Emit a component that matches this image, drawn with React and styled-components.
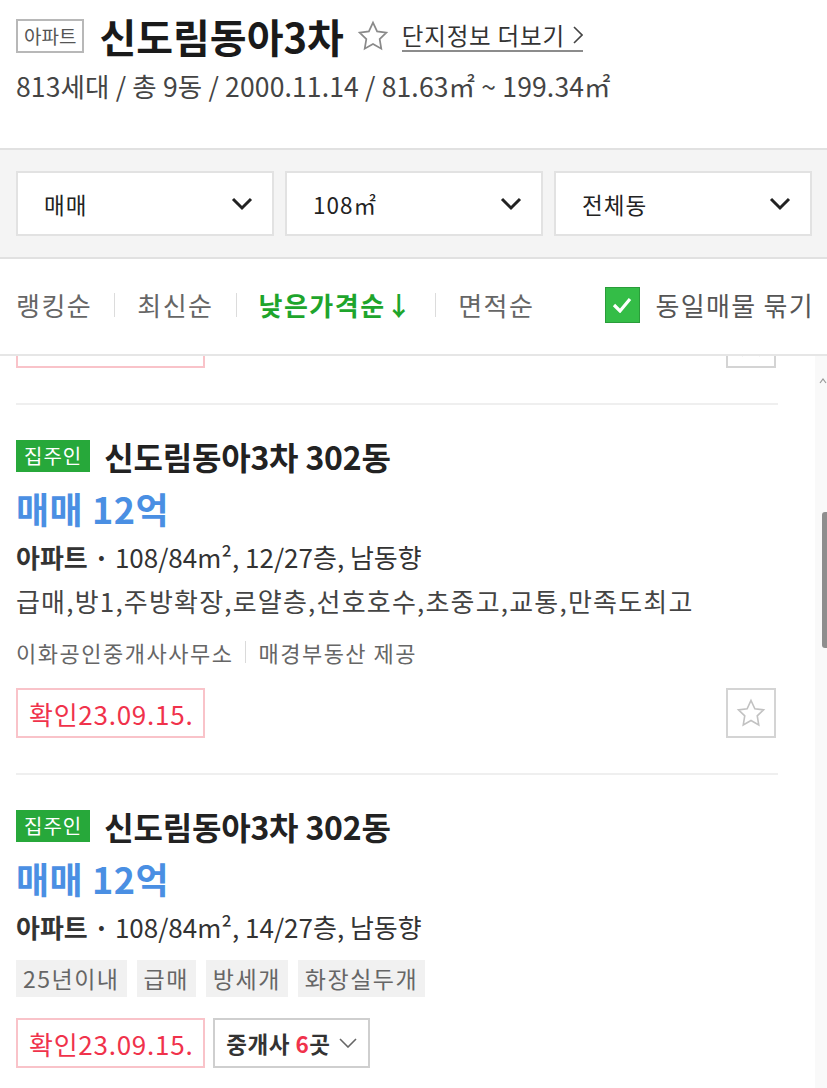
import React, { useLayoutEffect, useRef } from 'react'
import styled, { createGlobalStyle } from 'styled-components'

const GlobalStyle = createGlobalStyle`
  html, body {
    margin: 0;
    padding: 0;
    background: #fff;
  }
  body {
    font-family: "Noto Sans CJK KR", "Noto Sans", sans-serif;
    color: #222;
  }
  * { box-sizing: border-box; }
`

const Page = styled.div`
  width: 827px;
  height: 1088px;
  display: flex;
  flex-direction: column;
  overflow: hidden;
`

const Header = styled.header`
  padding: 12px 16px 44px;
`

const TitleRow = styled.div`
  display: flex;
  align-items: center;
  height: 48px;
`

const TypeBadge = styled.span`
  border: 2px solid #b8b8b8;
  color: #555;
  font-size: 19px;
  line-height: 30px;
  padding: 0 6px;
`

const Title = styled.h1`
  margin: 0 0 0 15px;
  font-size: 40px;
  font-weight: 700;
  line-height: 48px;
  color: #1a1a1a;
`

const FavIcon = styled.span`
  display: flex;
  margin-left: 13px;
`

const DetailLink = styled.a`
  margin-left: 13px;
  display: inline-flex;
  align-items: center;
  gap: 8px;
  font-size: 23.5px;
  line-height: 30px;
  color: #333;
  text-decoration: none;
  letter-spacing: 0.8px;
  border-bottom: 2px solid #8c8c8c;
`

const Meta = styled.div`
  margin-top: 8px;
  font-size: 26.5px;
  line-height: 36px;
  color: #444;
  letter-spacing: 0.15px;
  white-space: nowrap;
`

const FilterBar = styled.div`
  border-top: 2px solid #e1e1e1;
  border-bottom: 2px solid #e1e1e1;
  background: #f4f4f4;
  padding: 21px 15px 21px 16px;
  display: grid;
  grid-template-columns: repeat(3, 1fr);
  gap: 11px;
`

const Select = styled.div`
  height: 65px;
  border: 2px solid #e2e2e2;
  background: #fff;
  display: flex;
  align-items: center;
  justify-content: space-between;
  padding: 0 19px 0 26px;
  font-size: 22.5px;
  letter-spacing: 1px;
  color: #222;
`

const SortBar = styled.div`
  height: 95px;
  display: flex;
  align-items: center;
  padding: 0 13px 4px 16px;
`

const SortItem = styled.span`
  font-size: 26px;
  line-height: 36px;
  color: ${({ $active }) => ($active ? '#1ea52c' : '#666')};
  font-weight: ${({ $active }) => ($active ? 700 : 400)};
  letter-spacing: 1.5px;
  white-space: nowrap;
`

const SortSep = styled.span`
  width: 1px;
  height: 24px;
  background: #dcdcdc;
  margin: 0 22px;
`

const SameCheck = styled.label`
  margin-left: auto;
  display: flex;
  align-items: center;
  gap: 16px;
  font-size: 26px;
  color: #555;
  letter-spacing: 1.3px;
  white-space: nowrap;
`

const CheckBox = styled.span`
  width: 35px;
  height: 36px;
  background: #34bd47;
  border: 1px solid #2a9c3a;
  display: flex;
  align-items: center;
  justify-content: center;
`

const ListArea = styled.div`
  flex: 1;
  min-height: 0;
  display: flex;
  border-top: 2px solid #e6e6e6;
`

const Scroller = styled.div`
  flex: 1;
  overflow: hidden;
`

const ScrollTrack = styled.div`
  width: 12px;
  background: #f9f9f9;
  display: flex;
  flex-direction: column;
  align-items: flex-end;
  padding-top: 22px;
`

const ScrollThumb = styled.div`
  margin-top: 128px;
  width: 5px;
  height: 136px;
  background: #8e8e8e;
  border-radius: 3px 0 0 3px;
`

const Card = styled.article`
  margin-left: 16px;
  width: 762px;
  padding: ${({ $tail }) => ($tail ? '0 0 35px' : '35px 0')};
  border-bottom: 2px solid #efefef;
`

const CardTitleRow = styled.div`
  display: flex;
  align-items: center;
  height: 32px;
`

const OwnerBadge = styled.span`
  background: #27a83a;
  color: #fff;
  font-size: 20px;
  line-height: 32px;
  padding: 0 8px;
  letter-spacing: 1px;
`

const CardTitle = styled.h2`
  margin: 0 0 0 14px;
  font-size: 32px;
  font-weight: 700;
  line-height: 32px;
  letter-spacing: -0.2px;
  color: #222;
  white-space: nowrap;
`

const Price = styled.div`
  margin-top: 14px;
  font-size: 36px;
  font-weight: 700;
  line-height: 44px;
  letter-spacing: 0.5px;
  color: #4a8fe3;
`

const Info = styled.div`
  margin-top: 9px;
  font-size: 26px;
  line-height: 36px;
  color: #333;
  white-space: nowrap;

  strong {
    font-weight: 700;
  }
`

const Desc = styled.div`
  margin-top: 8px;
  font-size: 26px;
  line-height: 36px;
  color: #444;
  letter-spacing: 1.2px;
  white-space: nowrap;
`

const Broker = styled.div`
  margin-top: 18px;
  display: flex;
  align-items: center;
  font-size: 22px;
  line-height: 30px;
  color: #666;
  letter-spacing: 1.5px;
  white-space: nowrap;
`

const BrokerSep = styled.span`
  width: 1px;
  height: 22px;
  background: #dadada;
  margin: 0 12px;
`

const Tags = styled.div`
  margin: 15px 0 6px;
  display: flex;
  gap: 10px;
`

const Tag = styled.span`
  background: #f1f1f1;
  color: #666;
  font-size: 23px;
  line-height: 37px;
  padding: 0 7px;
  letter-spacing: 1.5px;
`

const Actions = styled.div`
  margin-top: ${({ $tail }) => ($tail ? '0' : '21px')};
  display: flex;
  align-items: center;
  gap: 8px;
`

const Confirm = styled.span`
  height: 50px;
  min-width: 189px;
  border: 2px solid #f9c3c9;
  color: #f0324b;
  font-size: 26px;
  padding: 0 10px 0 11px;
  display: flex;
  align-items: center;
  letter-spacing: 0.75px;
  white-space: nowrap;
`

const BrokerCount = styled.button`
  height: 50px;
  border: 2px solid #cfcfcf;
  background: #fff;
  padding: 0 11px;
  display: flex;
  align-items: center;
  gap: 8px;
  font-family: inherit;
  font-size: 22.5px;
  font-weight: 700;
  color: #333;
  letter-spacing: 0.5px;

  em {
    font-style: normal;
    color: #f0324b;
  }
`

const StarButton = styled.button`
  margin-left: auto;
  margin-right: 2px;
  width: 50px;
  height: 50px;
  border: 2px solid #d4d4d4;
  background: #fff;
  display: flex;
  align-items: center;
  justify-content: center;
  padding: 0;
`

const StarIcon = ({ size = 28, color = '#999', width = 1.4 }) => (
  <svg width={size} height={size} viewBox="0 0 24 24" fill="none">
    <polygon
      points="12,2 15.09,8.6 22,9.5 17,14.3 18.2,21.5 12,18 5.8,21.5 7,14.3 2,9.5 8.91,8.6"
      stroke={color}
      strokeWidth={width}
      strokeLinejoin="miter"
    />
  </svg>
)

const Chevron = () => (
  <svg width="22" height="14" viewBox="0 0 22 14" fill="none">
    <polyline points="2,2 11,11 20,2" stroke="#222" strokeWidth="3" />
  </svg>
)

const listings = [
  {
    id: 1,
    name: '신도림동아3차 302동',
    price: '매매 12억',
    floor: '12/27층',
    desc: '급매,방1,주방확장,로얄층,선호호수,초중고,교통,만족도최고',
    broker: '이화공인중개사사무소',
  },
  {
    id: 2,
    name: '신도림동아3차 302동',
    price: '매매 12억',
    floor: '14/27층',
    tags: ['25년이내', '급매', '방세개', '화장실두개'],
    brokers: 6,
  },
]

// the bottom of the previous listing, scrolled mostly out of view
const CardTail = ({ cardRef }) => (
  <Card ref={cardRef} $tail>
    <Actions $tail>
      <Confirm aria-hidden />
      <StarButton>
        <StarIcon size={30} color="#c2c2c2" width={1.3} />
      </StarButton>
    </Actions>
  </Card>
)

const ListingCard = ({ item }) => (
  <Card>
    <CardTitleRow>
      <OwnerBadge>집주인</OwnerBadge>
      <CardTitle>{item.name}</CardTitle>
    </CardTitleRow>
    <Price>{item.price}</Price>
    <Info>
      <strong>아파트 ·</strong> 108/84m², {item.floor}, 남동향
    </Info>
    {item.desc && <Desc>{item.desc}</Desc>}
    {item.broker && (
      <Broker>
        {item.broker}
        <BrokerSep />
        매경부동산 제공
      </Broker>
    )}
    {item.tags && (
      <Tags>
        {item.tags.map((t) => (
          <Tag key={t}>{t}</Tag>
        ))}
      </Tags>
    )}
    <Actions>
      <Confirm>확인23.09.15.</Confirm>
      {item.brokers && (
        <BrokerCount>
          <span>
            중개사 <em>{item.brokers}</em>곳
          </span>
          <svg width="18" height="10" viewBox="0 0 18 10" fill="none">
            <polyline points="1,1 9,9 17,1" stroke="#666" strokeWidth="1.6" />
          </svg>
        </BrokerCount>
      )}
      {!item.brokers && (
        <StarButton>
          <StarIcon size={30} color="#c2c2c2" width={1.3} />
        </StarButton>
      )}
    </Actions>
  </Card>
)

const App = () => {
  const scrollRef = useRef(null)
  const tailRef = useRef(null)

  useLayoutEffect(() => {
    if (scrollRef.current && tailRef.current) {
      scrollRef.current.scrollTop = tailRef.current.offsetHeight - 49
    }
  }, [])

  return (
    <>
      <GlobalStyle />
      <Page>
        <Header>
          <TitleRow>
            <TypeBadge>아파트</TypeBadge>
            <Title>신도림동아3차</Title>
            <FavIcon>
              <StarIcon size={32} color="#8a8a8a" width={1.3} />
            </FavIcon>
            <DetailLink href="#">
              단지정보 더보기
              <svg width="10" height="18" viewBox="0 0 10 18" fill="none">
                <polyline points="1,1 9,9 1,17" stroke="#444" strokeWidth="1.6" />
              </svg>
            </DetailLink>
          </TitleRow>
          <Meta>813세대 / 총 9동 / 2000.11.14 / 81.63㎡ ~ 199.34㎡</Meta>
        </Header>

        <FilterBar>
          <Select>
            매매
            <Chevron />
          </Select>
          <Select>
            108㎡
            <Chevron />
          </Select>
          <Select>
            전체동
            <Chevron />
          </Select>
        </FilterBar>

        <SortBar>
          <SortItem>랭킹순</SortItem>
          <SortSep />
          <SortItem>최신순</SortItem>
          <SortSep />
          <SortItem $active>낮은가격순↓</SortItem>
          <SortSep />
          <SortItem>면적순</SortItem>
          <SameCheck>
            <CheckBox>
              <svg width="20" height="16" viewBox="0 0 20 16" fill="none">
                <polyline points="2,8 8,14 18,2" stroke="#fff" strokeWidth="3.2" />
              </svg>
            </CheckBox>
            동일매물 묶기
          </SameCheck>
        </SortBar>

        <ListArea>
          <Scroller ref={scrollRef}>
            <CardTail cardRef={tailRef} />
            {listings.map((item) => (
              <ListingCard key={item.id} item={item} />
            ))}
          </Scroller>
          <ScrollTrack>
            <svg width="8" height="6" viewBox="0 0 8 6" fill="none">
              <polyline points="1,5 4,1 7,5" stroke="#999" strokeWidth="1.2" />
            </svg>
            <ScrollThumb />
          </ScrollTrack>
        </ListArea>
      </Page>
    </>
  )
}

export default App
